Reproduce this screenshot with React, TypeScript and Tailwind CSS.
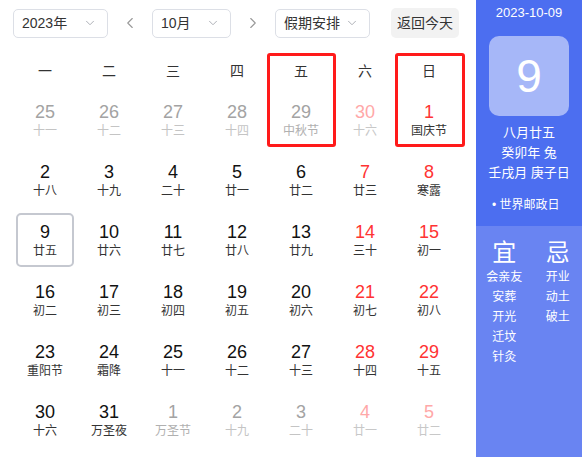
import React from "react";
import { ChevronDown, ChevronLeft, ChevronRight } from "lucide-react";

type Day = { d: string; l: string; kind?: "red" | "out" | "outRed"; lunarTone?: "dark" | "mid" };

const weekdays = ["一", "二", "三", "四", "五", "六", "日"];

const weeks: Day[][] = [
  [
    { d: "25", l: "十一", kind: "out" },
    { d: "26", l: "十二", kind: "out" },
    { d: "27", l: "十三", kind: "out" },
    { d: "28", l: "十四", kind: "out" },
    { d: "29", l: "中秋节", kind: "out", lunarTone: "mid" },
    { d: "30", l: "十六", kind: "outRed" },
    { d: "1", l: "国庆节", kind: "red" },
  ],
  [
    { d: "2", l: "十八" },
    { d: "3", l: "十九" },
    { d: "4", l: "二十" },
    { d: "5", l: "廿一" },
    { d: "6", l: "廿二" },
    { d: "7", l: "廿三", kind: "red" },
    { d: "8", l: "寒露", kind: "red" },
  ],
  [
    { d: "9", l: "廿五" },
    { d: "10", l: "廿六" },
    { d: "11", l: "廿七" },
    { d: "12", l: "廿八" },
    { d: "13", l: "廿九" },
    { d: "14", l: "三十", kind: "red" },
    { d: "15", l: "初一", kind: "red" },
  ],
  [
    { d: "16", l: "初二" },
    { d: "17", l: "初三" },
    { d: "18", l: "初四" },
    { d: "19", l: "初五" },
    { d: "20", l: "初六" },
    { d: "21", l: "初七", kind: "red" },
    { d: "22", l: "初八", kind: "red" },
  ],
  [
    { d: "23", l: "重阳节" },
    { d: "24", l: "霜降" },
    { d: "25", l: "十一" },
    { d: "26", l: "十二" },
    { d: "27", l: "十三" },
    { d: "28", l: "十四", kind: "red" },
    { d: "29", l: "十五", kind: "red" },
  ],
  [
    { d: "30", l: "十六" },
    { d: "31", l: "万圣夜" },
    { d: "1", l: "万圣节", kind: "out", lunarTone: "mid" },
    { d: "2", l: "十九", kind: "out" },
    { d: "3", l: "二十", kind: "out" },
    { d: "4", l: "廿一", kind: "outRed" },
    { d: "5", l: "廿二", kind: "outRed" },
  ],
];

const yi = ["会亲友", "安葬", "开光", "迁坟", "针灸"];
const ji = ["开业", "动土", "破土"];

const font = "font-['Liberation_Sans','Noto_Sans_CJK_SC',sans-serif]";

const Select = ({ label, width }: { label: string; width: string }) => (
  <div
    className={`${width} h-[29px] flex items-center justify-between pl-[8px] pr-[10px] border border-[#dcdfe6] rounded-[5px] text-[14px] text-[#333]`}
  >
    <span>{label}</span>
    <ChevronDown size={14} strokeWidth={1.6} className="text-[#a8abb2]" />
  </div>
);

const DayCell = ({ day, today }: { day: Day; today?: boolean }) => {
  let num = "text-[#111]";
  let lunar = "text-[#333]";
  if (day.kind === "red") num = "text-[#ff3333]";
  if (day.kind === "out") {
    num = "text-[#a3a3a3]";
    lunar = day.lunarTone === "mid" ? "text-[#b0b0b0]" : "text-[#c4c4c4]";
  }
  if (day.kind === "outRed") {
    num = "text-[#ffa8a8]";
    lunar = "text-[#c8c8c8]";
  }
  return (
    <div className="h-[60px] flex items-center justify-center">
      <div
        className={`w-[58px] h-[54px] flex flex-col items-center justify-center rounded-[5px] ${
          today ? "border-2 border-[#c5c8d0]" : ""
        }`}
      >
        <span className={`text-[18px] leading-[20px] ${num}`}>{day.d}</span>
        <span className={`text-[12px] leading-[16px] mt-[1px] ${lunar}`}>{day.l}</span>
      </div>
    </div>
  );
};

export default function App() {
  return (
    <div className={`flex w-[582px] h-[457px] bg-white ${font}`}>
      {/* Calendar */}
      <div className="w-[476px] flex flex-col">
        <div className="flex items-center pl-[13px] pt-[8px]">
          <Select label="2023年" width="w-[95px]" />
          <div className="w-[44px] flex justify-center text-[#999]">
            <ChevronLeft size={18} strokeWidth={1.5} />
          </div>
          <Select label="10月" width="w-[79px]" />
          <div className="w-[44px] flex justify-center text-[#999]">
            <ChevronRight size={18} strokeWidth={1.5} />
          </div>
          <Select label="假期安排" width="w-[95px]" />
          <button className="ml-[21px] w-[68px] h-[30px] rounded-[5px] bg-[#f2f2f2] text-[14px] text-[#333]">
            返回今天
          </button>
        </div>

        <div className="relative ml-[13px] mt-[15px] w-[448px]">
          <div className="grid grid-cols-7 h-[37px] items-center text-center text-[14px] text-[#333]">
            {weekdays.map((w) => (
              <span key={w}>{w}</span>
            ))}
          </div>
          {weeks.map((week, i) => (
            <div key={i} className="grid grid-cols-7">
              {week.map((day, j) => (
                <DayCell key={j} day={day} today={i === 2 && j === 0} />
              ))}
            </div>
          ))}

          {/* highlight boxes */}
          <div className="absolute left-[254px] top-0 w-[69px] h-[94px] border-[3px] border-[#ff1a1a] rounded-[3px]" />
          <div className="absolute left-[382px] top-0 w-[70px] h-[94px] border-[3px] border-[#ff1a1a] rounded-[3px]" />
        </div>
      </div>

      {/* Side panel */}
      <div className="w-[106px] flex flex-col text-white">
        <div className="h-[226px] bg-[#4c6ef0] flex flex-col items-center">
          <div className="pt-[5px] text-[13px] leading-[16px]">2023-10-09</div>
          <div className="mt-[15px] w-[80px] h-[80px] rounded-[10px] bg-white/50 flex items-center justify-center text-[46px]">
            9
          </div>
          <div className="mt-[7px] text-[13px] leading-[20px] text-center">
            <div>八月廿五</div>
            <div>癸卯年 兔</div>
            <div>壬戌月 庚子日</div>
          </div>
          <div className="mt-[12px] self-start pl-[16px] text-[12px] leading-[20px]">• 世界邮政日</div>
        </div>
        <div className="flex-1 bg-[#6984f2] flex pt-[13px] pl-[4px] gap-[5px]">
          <div className="w-[50px] flex flex-col items-center">
            <div className="text-[24px] leading-[28px]">宜</div>
            {yi.map((t) => (
              <div key={t} className="text-[12px] leading-[20px]">
                {t}
              </div>
            ))}
          </div>
          <div className="w-[50px] flex flex-col items-center">
            <div className="text-[24px] leading-[28px]">忌</div>
            {ji.map((t) => (
              <div key={t} className="text-[12px] leading-[20px]">
                {t}
              </div>
            ))}
          </div>
        </div>
      </div>
    </div>
  );
}
